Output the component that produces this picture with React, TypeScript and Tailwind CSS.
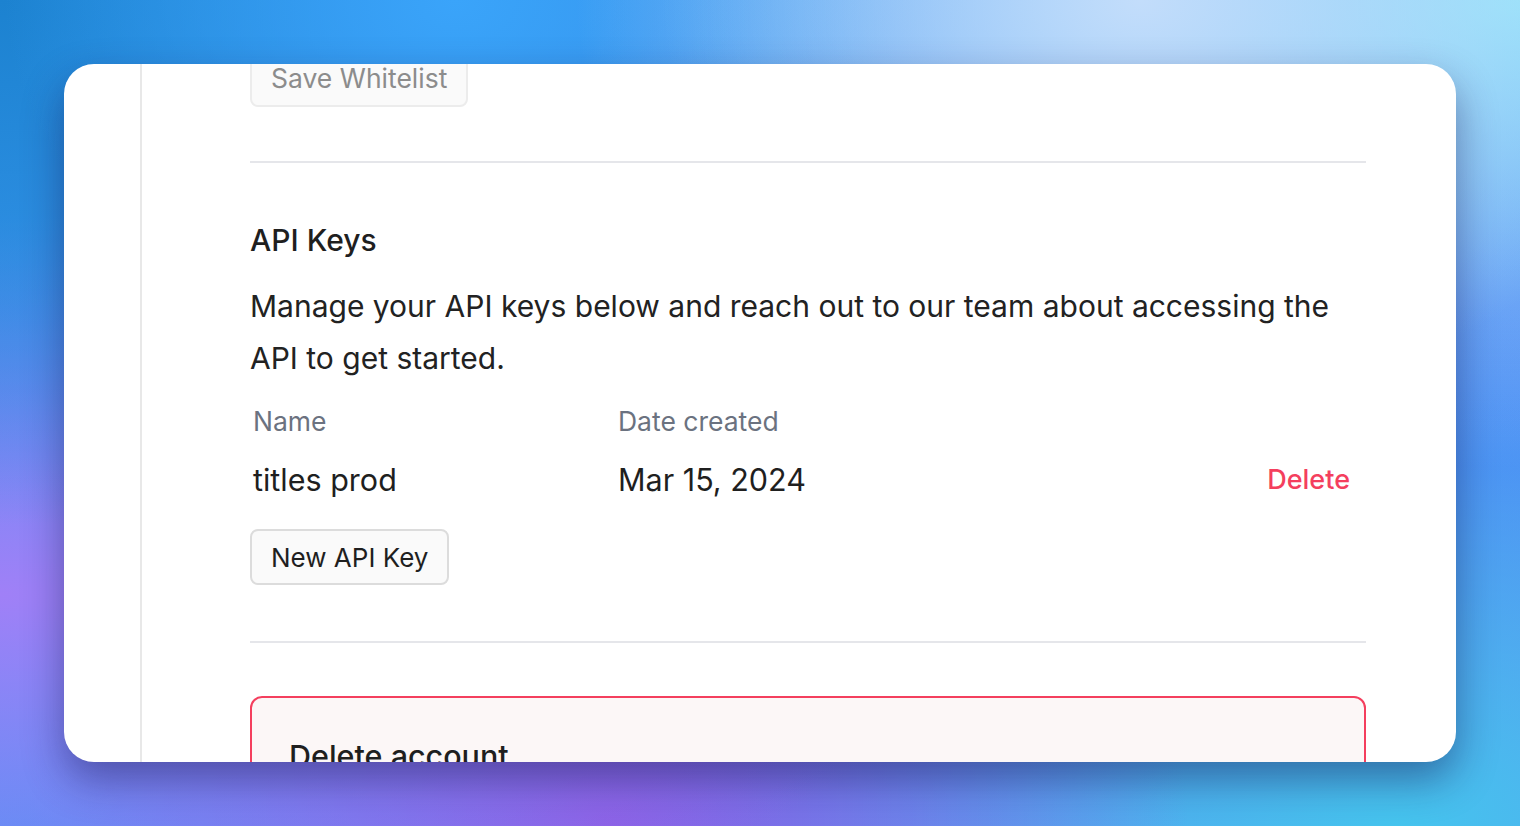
import React from "react";

// ─── API key row data ───
const apiKeys = [{ id: 1, name: "titles prod", created: "Mar 15, 2024" }];

export default function App() {
  return (
    <div className="w-[1520px] h-[826px] overflow-hidden p-[64px] font-['Inter','Noto_Sans',sans-serif] bg-[radial-gradient(ellipse_at_75%_0%,#c3ddfb_0%,transparent_35%),radial-gradient(ellipse_at_100%_0%,#8de3f9_0%,transparent_40%),radial-gradient(ellipse_at_30%_0%,#3aa4fa_0%,transparent_30%),radial-gradient(ellipse_at_0%_0%,#1c82d0_0%,transparent_45%),radial-gradient(ellipse_at_0%_72%,#a080f7_0%,transparent_45%),radial-gradient(ellipse_at_40%_100%,#8a5fe5_0%,transparent_45%),radial-gradient(ellipse_at_92%_100%,#45c4ee_0%,transparent_45%),radial-gradient(ellipse_at_100%_55%,#4f80f6_0%,transparent_45%),linear-gradient(135deg,#3a9df5,#6a7df0)]">
      <div className="h-[698px] rounded-[30px] bg-white overflow-hidden flex shadow-[0_18px_40px_rgba(20,20,80,0.45)]">
        {/* Sidebar edge */}
        <div className="w-[78px] shrink-0 border-r-2 border-[#e8e8e8]" />

        {/* Settings content */}
        <div className="w-[1116px] shrink-0 ml-[108px]">
          <div className="-mt-[13px]">
            <button className="h-[56px] px-[19px] rounded-[8px] border-2 border-[#ececec] bg-[#fafafa] text-[26.5px] text-[#8c8c8c]">
              Save Whitelist
            </button>
          </div>

          <div className="mt-[54px] h-[2px] bg-[#e5e6ea]" />

          {/* ── API Keys ── */}
          <h2 className="mt-[59px] text-[30px] leading-[36px] font-medium text-[#1f1f1f]">API Keys</h2>
          <p className="mt-[22px] text-[30px] leading-[52px] text-[#222]">
            Manage your API keys below and reach out to our team about accessing the API to get started.
          </p>

          <div className="mt-[19px] grid grid-cols-[365px_1fr_auto] pl-[3px] pr-[16px] items-center">
            <div className="text-[26.5px] leading-[36px] text-[#6b7280]">Name</div>
            <div className="text-[26.5px] leading-[36px] text-[#6b7280]">Date created</div>
            <div />
            {apiKeys.map((k) => (
              <React.Fragment key={k.id}>
                <div className="mt-[21px] text-[30.5px] leading-[40px] text-[#1f1f1f]">{k.name}</div>
                <div className="mt-[21px] text-[30.5px] leading-[40px] text-[#1f1f1f]">{k.created}</div>
                <button className="mt-[21px] text-[27px] leading-[40px] font-medium text-[#f43f5e]">Delete</button>
              </React.Fragment>
            ))}
          </div>

          <div className="mt-[29px]">
            <button className="h-[56px] px-[19px] rounded-[8px] border-2 border-[#dcdcdc] bg-[#fafafa] text-[26px] text-[#1f1f1f]">
              New API Key
            </button>
          </div>

          <div className="mt-[56px] h-[2px] bg-[#e5e6ea]" />

          {/* ── Danger zone ── */}
          <div className="mt-[53px] rounded-[12px] border-2 border-[#f43f5e] bg-[#fcf7f7] px-[37px] pt-[38px] pb-[40px]">
            <h3 className="text-[30.5px] leading-[40px] font-medium text-[#1f1f1f]">Delete account</h3>
          </div>
        </div>
      </div>
    </div>
  );
}
